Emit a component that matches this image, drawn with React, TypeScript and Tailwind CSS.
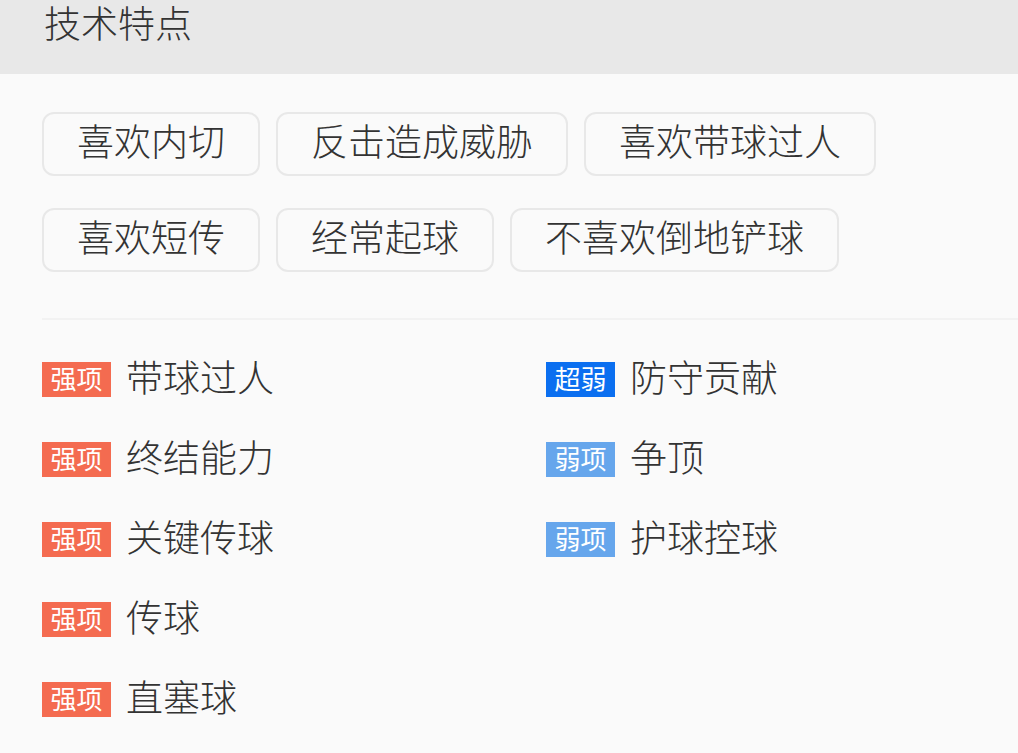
const tags = [
  ["喜欢内切", "反击造成威胁", "喜欢带球过人"],
  ["喜欢短传", "经常起球", "不喜欢倒地铲球"],
];

type Item = { kind: "strong" | "weak" | "superWeak"; label: string };

const left: Item[] = [
  { kind: "strong", label: "带球过人" },
  { kind: "strong", label: "终结能力" },
  { kind: "strong", label: "关键传球" },
  { kind: "strong", label: "传球" },
  { kind: "strong", label: "直塞球" },
];

const right: Item[] = [
  { kind: "superWeak", label: "防守贡献" },
  { kind: "weak", label: "争顶" },
  { kind: "weak", label: "护球控球" },
];

const badgeText = { strong: "强项", weak: "弱项", superWeak: "超弱" };
const badgeColor = {
  strong: "bg-[#f46b50]",
  weak: "bg-[#66a6ec]",
  superWeak: "bg-[#0b6ff0]",
};

const Row = ({ item }: { item: Item }) => (
  <div className="flex h-20 items-center">
    <span
      className={`${badgeColor[item.kind]} flex h-[35px] w-[69px] items-center justify-center pb-[3px] text-[26px] font-normal leading-none text-white`}
    >
      {badgeText[item.kind]}
    </span>
    <span className="ml-[15px] pb-[5px] text-[37px] leading-none text-[#333]">
      {item.label}
    </span>
  </div>
);

export default function App() {
  return (
    <div
      className="min-h-screen bg-[#fafafa] font-light"
      style={{ fontFamily: '"Noto Sans CJK SC", "Noto Sans", sans-serif' }}
    >
      <div className="h-[74px] bg-[#e8e8e8] pl-[44px]">
        <h1 className="text-[37px] leading-[44px] text-[#333]">技术特点</h1>
      </div>

      <div className="pl-[42px]">
        <div className="flex flex-col gap-8 pt-[38px] pb-[46px]">
          {tags.map((row, i) => (
            <div key={i} className="flex gap-4">
              {row.map((t) => (
                <span
                  key={t}
                  className="flex h-16 items-center rounded-xl border-2 border-[#e8e8e8] px-[33px] pb-2 text-[37px] leading-none text-[#333]"
                >
                  {t}
                </span>
              ))}
            </div>
          ))}
        </div>

        <div className="h-[2px] bg-[#f2f2f2]" />

        <div className="flex pt-[19px]">
          <div className="w-[504px]">
            {left.map((it) => (
              <Row key={it.label} item={it} />
            ))}
          </div>
          <div>
            {right.map((it) => (
              <Row key={it.label} item={it} />
            ))}
          </div>
        </div>
      </div>
    </div>
  );
}
